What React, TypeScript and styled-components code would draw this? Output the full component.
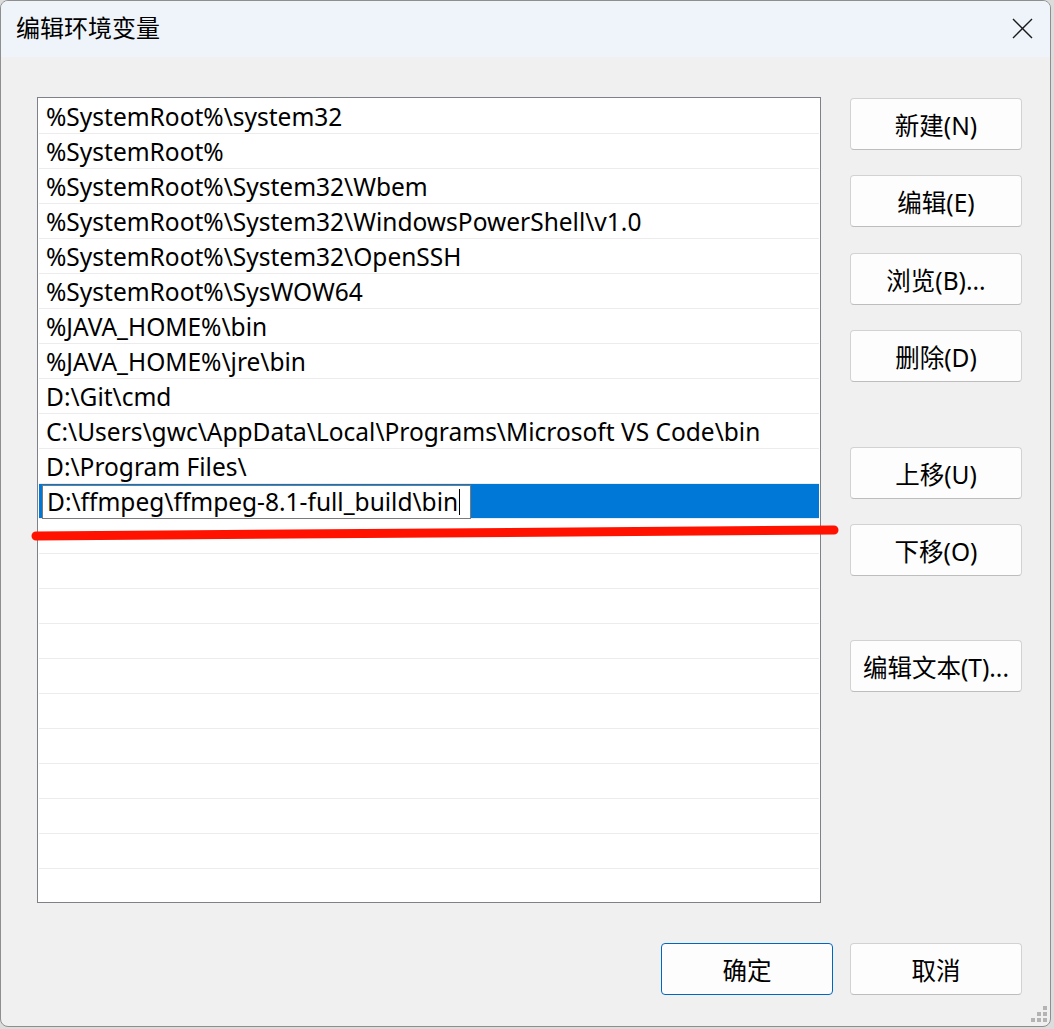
import React from "react";
import styled, { createGlobalStyle } from "styled-components";

const Global = createGlobalStyle`
  html, body { margin: 0; padding: 0; background: #dcdcdc; }
  body { width: 1054px; height: 1029px; overflow: hidden; }
  * { box-sizing: border-box; }
`;

const FONT = `"Noto Sans", "Noto Sans CJK SC", sans-serif`;

const Dialog = styled.div`
  position: relative;
  width: 1051px;
  height: 1027px;
  background: #f0f0f0;
  border: 1px solid #8e8e8e;
  border-radius: 8px;
  overflow: hidden;
  display: flex;
  flex-direction: column;
  font-family: ${FONT};
  color: #000;
`;

const TitleBar = styled.div`
  height: 56px;
  background: #eef4f9;
  display: flex;
  align-items: center;
  justify-content: space-between;
  padding: 0 14px 0 15px;
`;

const Title = styled.div`
  font-size: 24px;
  line-height: 1;
  margin-top: -2px;
`;

const CloseBtn = styled.div`
  width: 28px;
  height: 28px;
  display: flex;
  align-items: center;
  justify-content: center;
  margin-top: -2px;
`;

const Body = styled.div`
  flex: 1;
  display: grid;
  grid-template-columns: 784px 172px;
  grid-template-rows: 806px auto;
  column-gap: 29px;
  padding: 40px 0 0 36px;
`;

const ListBox = styled.div`
  background: #fff;
  border: 1px solid #7f8188;
  padding: 1px;
  overflow: hidden;
  display: flex;
  flex-direction: column;
`;

const Row = styled.div<{ $selected?: boolean }>`
  flex: none;
  height: 35px;
  border-bottom: 1px solid #ececec;
  display: flex;
  align-items: center;
  padding-left: ${(p) => (p.$selected ? "3px" : "7px")};
  font-size: 24.5px;
  white-space: nowrap;
  background: ${(p) => (p.$selected ? "#0078d7" : "#fff")};
`;

const EditBox = styled.div`
  height: 34px;
  margin-top: 1px;
  background: #fff;
  border: 1px solid #7a7a7a;
  display: flex;
  align-items: center;
  padding: 0 10px 0 4px;
  font-size: 24.5px;
`;

const Caret = styled.span`
  display: inline-block;
  width: 1px;
  height: 26px;
  background: #000;
  margin-left: 1px;
`;

const ButtonColumn = styled.div`
  display: flex;
  flex-direction: column;
  padding-top: 1px;
`;

const Button = styled.div<{ $gap?: number; $primary?: boolean }>`
  width: 172px;
  height: 52px;
  margin-top: ${(p) => p.$gap ?? 0}px;
  background: #fdfdfd;
  border: 1px solid ${(p) => (p.$primary ? "#0067c0" : "#d2d2d2")};
  border-bottom-color: ${(p) => (p.$primary ? "#0067c0" : "#bdbdbd")};
  border-radius: 4px;
  display: flex;
  align-items: center;
  justify-content: center;
  font-size: 24.5px;
  white-space: nowrap;
`;

const Footer = styled.div`
  grid-column: 1 / 3;
  display: flex;
  justify-content: flex-end;
  gap: 17px;
  margin-top: 40px;
`;

const Grip = styled.svg`
  position: absolute;
  right: 3px;
  bottom: 4px;
`;

const Annotation = styled.svg`
  position: absolute;
  left: 0;
  top: 0;
  pointer-events: none;
`;

const paths = [
  "%SystemRoot%\\system32",
  "%SystemRoot%",
  "%SystemRoot%\\System32\\Wbem",
  "%SystemRoot%\\System32\\WindowsPowerShell\\v1.0",
  "%SystemRoot%\\System32\\OpenSSH",
  "%SystemRoot%\\SysWOW64",
  "%JAVA_HOME%\\bin",
  "%JAVA_HOME%\\jre\\bin",
  "D:\\Git\\cmd",
  "C:\\Users\\gwc\\AppData\\Local\\Programs\\Microsoft VS Code\\bin",
  "D:\\Program Files\\",
];

const sideButtons: { label: string; gap: number }[] = [
  { label: "新建(N)", gap: 0 },
  { label: "编辑(E)", gap: 25 },
  { label: "浏览(B)...", gap: 26 },
  { label: "删除(D)", gap: 25 },
  { label: "上移(U)", gap: 65 },
  { label: "下移(O)", gap: 25 },
  { label: "编辑文本(T)...", gap: 64 },
];

export default function App() {
  const empty = Array.from({ length: 11 });
  return (
    <>
      <Global />
      <Dialog>
        <TitleBar>
          <Title>编辑环境变量</Title>
          <CloseBtn>
            <svg width="21" height="21" viewBox="0 0 21 21">
              <path d="M1 1 L20 20 M20 1 L1 20" stroke="#1a1a1a" strokeWidth="1.4" fill="none" />
            </svg>
          </CloseBtn>
        </TitleBar>
        <Body>
          <ListBox>
            {paths.map((p) => (
              <Row key={p}>{p}</Row>
            ))}
            <Row $selected>
              <EditBox>
                D:\ffmpeg\ffmpeg-8.1-full_build\bin
                <Caret />
              </EditBox>
            </Row>
            {empty.map((_, i) => (
              <Row key={"e" + i} />
            ))}
          </ListBox>
          <ButtonColumn>
            {sideButtons.map((b) => (
              <Button key={b.label} $gap={b.gap}>
                {b.label}
              </Button>
            ))}
          </ButtonColumn>
          <Footer>
            <Button $primary>确定</Button>
            <Button>取消</Button>
          </Footer>
        </Body>
        <Grip width="16" height="16" viewBox="0 0 16 16">
          <rect x="12" y="0" width="4" height="4" fill="#b4b4b4" />
          <rect x="6" y="6" width="4" height="4" fill="#b4b4b4" />
          <rect x="12" y="6" width="4" height="4" fill="#b4b4b4" />
          <rect x="0" y="12" width="4" height="4" fill="#b4b4b4" />
          <rect x="6" y="12" width="4" height="4" fill="#b4b4b4" />
          <rect x="12" y="12" width="4" height="4" fill="#b4b4b4" />
        </Grip>
        <Annotation width="1051" height="1027">
          <line x1="35" y1="535" x2="833" y2="529" stroke="#ff1200" strokeWidth="9" strokeLinecap="round" />
        </Annotation>
      </Dialog>
    </>
  );
}
